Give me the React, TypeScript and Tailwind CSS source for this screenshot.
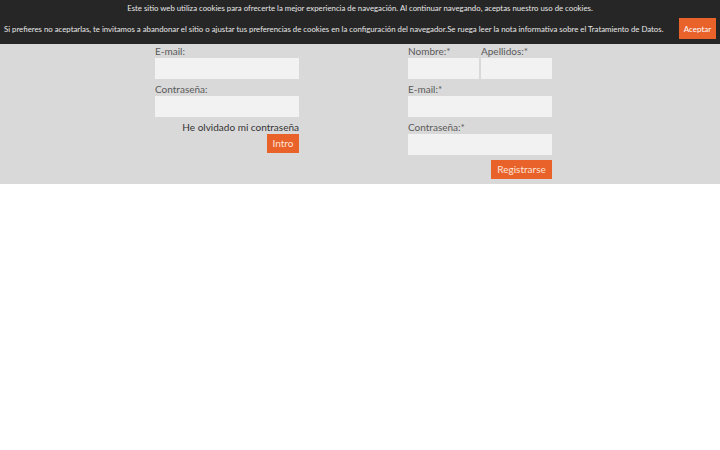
export default function App() {
  const font = { fontFamily: "Lato, 'Noto Sans', sans-serif" }
  return (
    <div className="min-h-[450px] bg-white" style={font}>
      <div className="bg-[#262626] text-[#e6e6e6] h-[44px]">
        <p className="text-[7.8px] leading-[10px] text-center pt-[3px]">
          Este sitio web utiliza cookies para ofrecerte la mejor experiencia de navegación. Al continuar navegando, aceptas nuestro uso de cookies.
        </p>
        <div className="flex items-center pl-[4px] pr-[4px] mt-[5px] justify-between">
          <p className="text-[7.8px] leading-[10px] whitespace-nowrap">
            Si prefieres no aceptarlas, te invitamos a abandonar el sitio o ajustar tus preferencias de cookies en la configuración del navegador.Se ruega leer la nota informativa sobre el Tratamiento de Datos.
          </p>
          <button className="bg-[#e8622a] text-white text-[8px] h-[21px] w-[37px]">Aceptar</button>
        </div>
      </div>

      <div className="bg-[#d9d9d9] pt-[1px] pb-[5px] pl-[155px] flex gap-[109px]">
        <div className="w-[144px] flex flex-col">
          <label className="text-[10px] leading-[13px] text-[#5a5a5a]">E-mail:</label>
          <input className="bg-[#f2f2f2] h-[21px] w-full" />
          <label className="text-[10px] leading-[13px] text-[#5a5a5a] mt-[4px]">Contraseña:</label>
          <input type="password" className="bg-[#f2f2f2] h-[21px] w-full" />
          <p className="text-[10px] leading-[13px] text-[#333] text-right mt-[4px]">He olvidado mi contraseña</p>
          <div className="flex justify-end">
            <button className="bg-[#e8622a] text-[#fde4d6] text-[10px] h-[19px] w-[32px]">Intro</button>
          </div>
        </div>

        <div className="w-[144px] flex flex-col">
          <div className="flex gap-[2px]">
            <div className="flex flex-col w-[71px]">
              <label className="text-[10px] leading-[13px] text-[#5a5a5a]">Nombre:*</label>
              <input className="bg-[#f2f2f2] h-[21px] w-full" />
            </div>
            <div className="flex flex-col w-[71px]">
              <label className="text-[10px] leading-[13px] text-[#5a5a5a]">Apellidos:*</label>
              <input className="bg-[#f2f2f2] h-[21px] w-full" />
            </div>
          </div>
          <label className="text-[10px] leading-[13px] text-[#5a5a5a] mt-[4px]">E-mail:*</label>
          <input className="bg-[#f2f2f2] h-[21px] w-full" />
          <label className="text-[10px] leading-[13px] text-[#5a5a5a] mt-[4px]">Contraseña:*</label>
          <input type="password" className="bg-[#f2f2f2] h-[21px] w-full" />
          <div className="flex justify-end mt-[5px]">
            <button className="bg-[#e8622a] text-[#fde4d6] text-[10px] h-[19px] w-[61px]">Registrarse</button>
          </div>
        </div>
      </div>
    </div>
  )
}
